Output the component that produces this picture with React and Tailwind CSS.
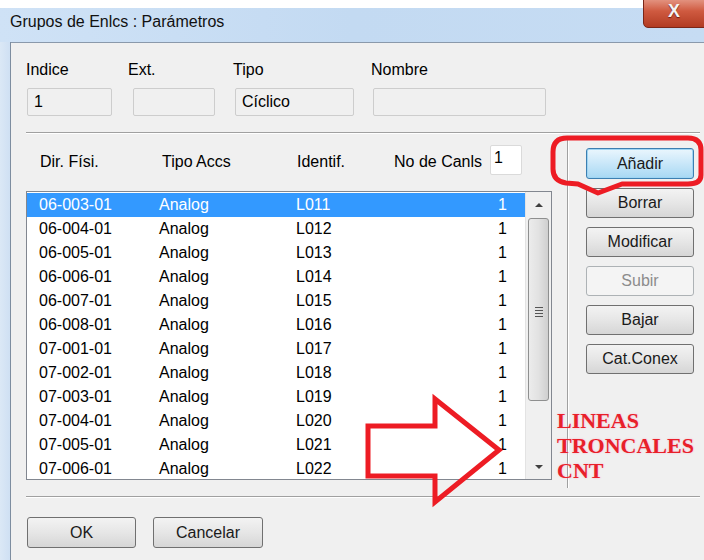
import React from 'react'

const rows = [
  ['06-003-01', 'L011'],
  ['06-004-01', 'L012'],
  ['06-005-01', 'L013'],
  ['06-006-01', 'L014'],
  ['06-007-01', 'L015'],
  ['06-008-01', 'L016'],
  ['07-001-01', 'L017'],
  ['07-002-01', 'L018'],
  ['07-003-01', 'L019'],
  ['07-004-01', 'L020'],
  ['07-005-01', 'L021'],
  ['07-006-01', 'L022'],
]

function WinButton({ children, variant = 'normal', className = '' }) {
  // classic Win7 push button; focused = default blue, disabled = greyed out
  const styles = {
    normal: 'border-[#707070] bg-gradient-to-b from-[#f3f3f3] via-[#e6e6e6] to-[#d6d6d6] text-[#1a1a1a]',
    focused: 'border-[#3c7fb1] bg-gradient-to-b from-[#eaf6fd] via-[#c9e7f9] to-[#a7d8f3] text-[#1a1a1a] shadow-[inset_0_0_0_1px_#9fd5f3]',
    disabled: 'border-[#adb2b5] bg-[#f4f4f4] text-[#8c8c8c]',
  }
  return (
    <div className={`flex items-center justify-center h-[30px] rounded-[3px] border text-[16px] ${styles[variant]} ${className}`}>
      {children}
    </div>
  )
}

function Field({ label, value = '', width, labelShift = 0 }) {
  return (
    <div className="flex flex-col" style={{ width }}>
      <span className="leading-[18px] text-[16px] h-[18px]" style={{ marginLeft: labelShift }}>{label}</span>
      <div className="mt-[9px] ml-[1px] h-[28px] rounded-[2px] border border-[#cdcdcd] bg-[#f0f0f0] pl-[6px] flex items-center text-[16px]">
        {value}
      </div>
    </div>
  )
}

function Scrollbar() {
  return (
    <div className="w-[26px] flex flex-col bg-[#f0f0f0] border-l border-[#e3e3e3]">
      <div className="h-[26px] flex items-center justify-center">
        <div className="w-0 h-0 border-l-[4px] border-r-[4px] border-b-[4px] border-l-transparent border-r-transparent border-b-[#404040]" />
      </div>
      <div className="mx-[2px] h-[183px] rounded-[3px] border border-[#8e8f8f] bg-gradient-to-r from-[#ececec] via-[#e2e2e2] to-[#cfcfcf] flex items-center justify-center">
        <div className="flex flex-col gap-[2px] mt-[4px]">
          <div className="w-[8px] h-px bg-[#555]" />
          <div className="w-[8px] h-px bg-[#555]" />
          <div className="w-[8px] h-px bg-[#555]" />
          <div className="w-[8px] h-px bg-[#555]" />
        </div>
      </div>
      <div className="flex-1" />
      <div className="h-[24px] flex items-center justify-center">
        <div className="w-0 h-0 border-l-[4px] border-r-[4px] border-t-[4px] border-l-transparent border-r-transparent border-t-[#404040]" />
      </div>
    </div>
  )
}

export default function App() {
  return (
    <div className="relative w-[704px] h-[560px] overflow-hidden bg-[#f0f0f0] text-black font-['Liberation_Sans',Arial,sans-serif]">
      {/* window chrome */}
      <div className="h-[8px] bg-white" />
      <div className="h-[34px] bg-gradient-to-r from-[#cfe2f6] via-[#c3daf2] to-[#c6dcf3] pl-[10px] pt-[4px] text-[16px] leading-[20px] text-[#111]">
        Grupos de Enlcs : Parámetros
      </div>
      <div className="absolute left-[643px] top-[-6px] w-[70px] h-[34px] rounded-bl-[5px] border border-[#7a2618] bg-gradient-to-b from-[#e9a99a] via-[#cf5a40] to-[#b23b22] flex items-center justify-start pl-[24px] pt-[1px] text-[#f4f4f4] font-bold text-[18px] [text-shadow:0_1px_1px_#6a1a10]">
        X
      </div>

      <div className="flex h-[518px]">
        <div className="w-[11px] bg-gradient-to-r from-[#dbe8f6] to-[#cfe0f3] border-r border-[#7d8da0]" />

        {/* dialog body */}
        <div className="flex-1 flex flex-col bg-[#f0f0f0] border-t border-[#8a99ab] pl-[15px] text-[16px]">
          <div className="flex pt-[18px]">
            <Field label="Indice" value="1" width={86} />
            <div className="w-[20px]" />
            <Field label="Ext." width={83} labelShift={-4} />
            <div className="w-[19px]" />
            <Field label="Tipo" value="Cíclico" width={120} labelShift={-1} />
            <div className="w-[18px]" />
            <Field label="Nombre" width={174} labelShift={-1} />
          </div>

          <div className="mt-[16px] mr-[4px] border-t border-[#a0a0a0] border-b border-b-white" />

          <div className="flex h-[362px]">
            {/* channel list */}
            <div className="w-[526px] flex flex-col">
              <div className="mt-[11px] h-[30px] flex items-center">
                <span className="w-[136px] pl-[14px] mt-[3px]">Dir. Físi.</span>
                <span className="w-[135px] mt-[3px]">Tipo Accs</span>
                <span className="w-[97px] mt-[3px]">Identif.</span>
                <span className="w-[96px] mt-[3px]">No de Canls</span>
                <div className="w-[32px] h-[30px] bg-white border border-[#dadada] rounded-[2px] pl-[3px] leading-[24px]">1</div>
              </div>

              <div className="mt-[16px] h-[289px] border border-[#828790] bg-white flex overflow-hidden">
                <div className="flex-1 flex flex-col pt-[1px]">
                  {rows.map(([dir, id], i) => (
                    <div
                      key={dir}
                      className={`h-[24px] shrink-0 flex items-center pl-[12px] ${i === 0 ? 'bg-[#3399ff] text-white' : ''}`}
                    >
                      <span className="w-[120px]">{dir}</span>
                      <span className="w-[137px]">Analog</span>
                      <span className="flex-1">{id}</span>
                      <span className="pr-[18px]">1</span>
                    </div>
                  ))}
                </div>
                <Scrollbar />
              </div>
            </div>

            <div className="ml-[15px] mt-[6px] w-px h-[348px] bg-[#a0a0a0] border-r border-white box-content" />

            {/* action buttons */}
            <div className="ml-[17px] mt-[14px] w-[108px] flex flex-col gap-[9px]">
              <WinButton variant="focused" className="h-[31px]">Añadir</WinButton>
              <WinButton>Borrar</WinButton>
              <WinButton>Modificar</WinButton>
              <WinButton variant="disabled">Subir</WinButton>
              <WinButton>Bajar</WinButton>
              <WinButton>Cat.Conex</WinButton>
            </div>
          </div>

          <div className="mr-[4px] border-t border-[#a0a0a0] border-b border-b-white" />

          <div className="flex mt-[19px] pl-[1px] gap-[17px]">
            <WinButton className="w-[109px] h-[31px]">OK</WinButton>
            <WinButton className="w-[110px] h-[31px]">Cancelar</WinButton>
          </div>
        </div>
      </div>

      {/* red markup drawn on top */}
      <svg className="absolute inset-0 pointer-events-none" width="704" height="560" viewBox="0 0 704 560">
        <path
          d="M567,138 L688,138 Q701,138 701,150 L701,175 Q701,184 688,184 L622,184 L598,193 L578,184 L566,183 Q553,181 553,169 L553,152 Q553,138 567,138 Z"
          fill="none"
          stroke="#ed1c24"
          strokeWidth="5"
          strokeLinejoin="round"
        />
        <polygon
          points="368,426 435,426 435,399 499,450 435,502 435,476 368,476"
          fill="none"
          stroke="#ed1c24"
          strokeWidth="5"
          strokeLinejoin="miter"
        />
      </svg>
      <div className="absolute left-[557px] top-[408px] font-['Liberation_Serif',serif] font-bold text-[22px] leading-[25px] text-[#e8202a] [text-shadow:0_0_2px_#f7b0c8]">
        <div>LINEAS</div>
        <div>TRONCALES</div>
        <div>CNT</div>
      </div>
    </div>
  )
}
